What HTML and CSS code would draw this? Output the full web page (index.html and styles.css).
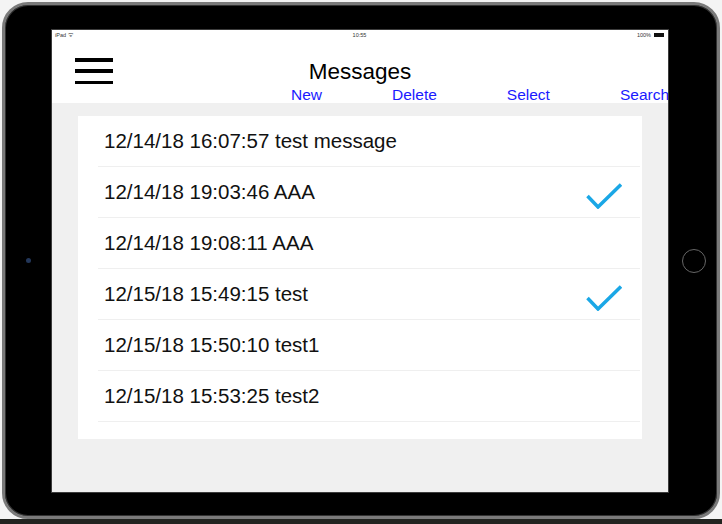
FILE: index.html
```html
<!DOCTYPE html>
<html>
<head>
<meta charset="utf-8">
<link rel="stylesheet" href="styles.css">
</head>
<body>
<div class="device">
  <div class="bezel-left"><span class="camera"></span></div>
  <div class="screen">
    <div class="status">
      <span class="st-left">iPad <span class="wifi">ᯤ</span></span>
      <span class="st-center">10:55</span>
      <span class="st-right">100% <span class="battery"></span></span>
    </div>
    <div class="header">
      <div class="title-row">
        <div class="burger"><span></span><span></span><span></span></div>
        <div class="title">Messages</div>
        <div></div>
      </div>
      <div class="actions">
        <span>New</span><span>Delete</span><span>Select</span><span>Search</span>
      </div>
    </div>
    <div class="content">
      <div class="card">
        <div class="list">
          <div class="row"><span>12/14/18 16:07:57 test message</span></div>
          <div class="row"><span>12/14/18 19:03:46 AAA</span>
            <svg class="check" width="36" height="26" viewBox="0 0 36 26"><polyline points="1.5,13 12,24 35,1.5" fill="none" stroke="#1aa7e6" stroke-width="3.5"/></svg>
          </div>
          <div class="row"><span>12/14/18 19:08:11 AAA</span></div>
          <div class="row"><span>12/15/18 15:49:15 test</span>
            <svg class="check" width="36" height="26" viewBox="0 0 36 26"><polyline points="1.5,13 12,24 35,1.5" fill="none" stroke="#1aa7e6" stroke-width="3.5"/></svg>
          </div>
          <div class="row"><span>12/15/18 15:50:10 test1</span></div>
          <div class="row"><span>12/15/18 15:53:25 test2</span></div>
        </div>
      </div>
    </div>
  </div>
  <div class="bezel-right"><span class="home"></span></div>
</div>
</body>
</html>
```
FILE: styles.css
```css
html, body {
  margin: 0;
  padding: 0;
}
body {
  width: 722px;
  height: 524px;
  overflow: hidden;
  background: linear-gradient(to bottom, #f4f4f4 0, #f4f4f4 519px, #222420 519px);
  font-family: "Liberation Sans", Arial, sans-serif;
}
.device {
  margin: 2px 0 0 2px;
  width: 718px;
  height: 517px;
  box-sizing: border-box;
  border: 3px solid #7a7a7a;
  border-radius: 26px;
  background: #000;
  box-shadow: inset 0 0 0 1px #333;
  display: grid;
  grid-template-columns: 47px 616px 1fr;
}
.bezel-left, .bezel-right {
  display: flex;
  align-items: center;
  justify-content: center;
}
.camera {
  width: 5px;
  height: 5px;
  border-radius: 50%;
  background: #23375a;
}
.home {
  width: 22px;
  height: 22px;
  margin-left: 3px;
  border-radius: 50%;
  border: 1.5px solid #666;
}
.screen {
  margin-top: 25px;
  height: 462px;
  background: #f0f0f0;
  box-shadow: 0 0 0 1px #3c3c3c;
  overflow: hidden;
  display: flex;
  flex-direction: column;
}
.status {
  height: 10px;
  background: #fff;
  display: grid;
  grid-template-columns: 1fr auto 1fr;
  align-items: center;
  font-size: 5.5px;
  color: #333;
  padding: 0 4px 0 3px;
}
.st-right {
  justify-self: end;
  display: flex;
  align-items: center;
  gap: 3px;
}
.battery {
  display: inline-block;
  width: 9px;
  height: 3.5px;
  background: #111;
  border-right: 1px solid #111;
}
.header {
  height: 63px;
  box-sizing: border-box;
  background: #fff;
  padding-top: 18px;
}
.title-row {
  display: grid;
  grid-template-columns: 1fr auto 1fr;
  height: 26px;
}
.burger {
  margin-left: 23px;
  width: 38px;
  height: 26px;
  display: flex;
  flex-direction: column;
  justify-content: space-between;
}
.burger span {
  height: 3.5px;
  background: #000;
}
.title {
  font-size: 22.5px;
  line-height: 26px;
  padding-top: 1px;
  color: #000;
}
.actions {
  margin-top: 2px;
  height: 17px;
  padding-left: 239px;
  display: flex;
  gap: 70px;
  font-size: 15.5px;
  line-height: 17px;
  color: #1a1aff;
  white-space: nowrap;
}
.content {
  flex: 1;
  padding: 13px 26px 0;
}
.card {
  background: #fff;
  padding-bottom: 17px;
}
.list {
  margin-left: 20px;
  margin-right: 2px;
}
.row {
  height: 50px;
  border-bottom: 1px solid #efefef;
  display: flex;
  align-items: center;
  justify-content: space-between;
  padding-left: 6px;
  font-size: 20.5px;
  color: #111;
}
.check {
  margin-right: 18px;
  margin-top: 7px;
}
```
